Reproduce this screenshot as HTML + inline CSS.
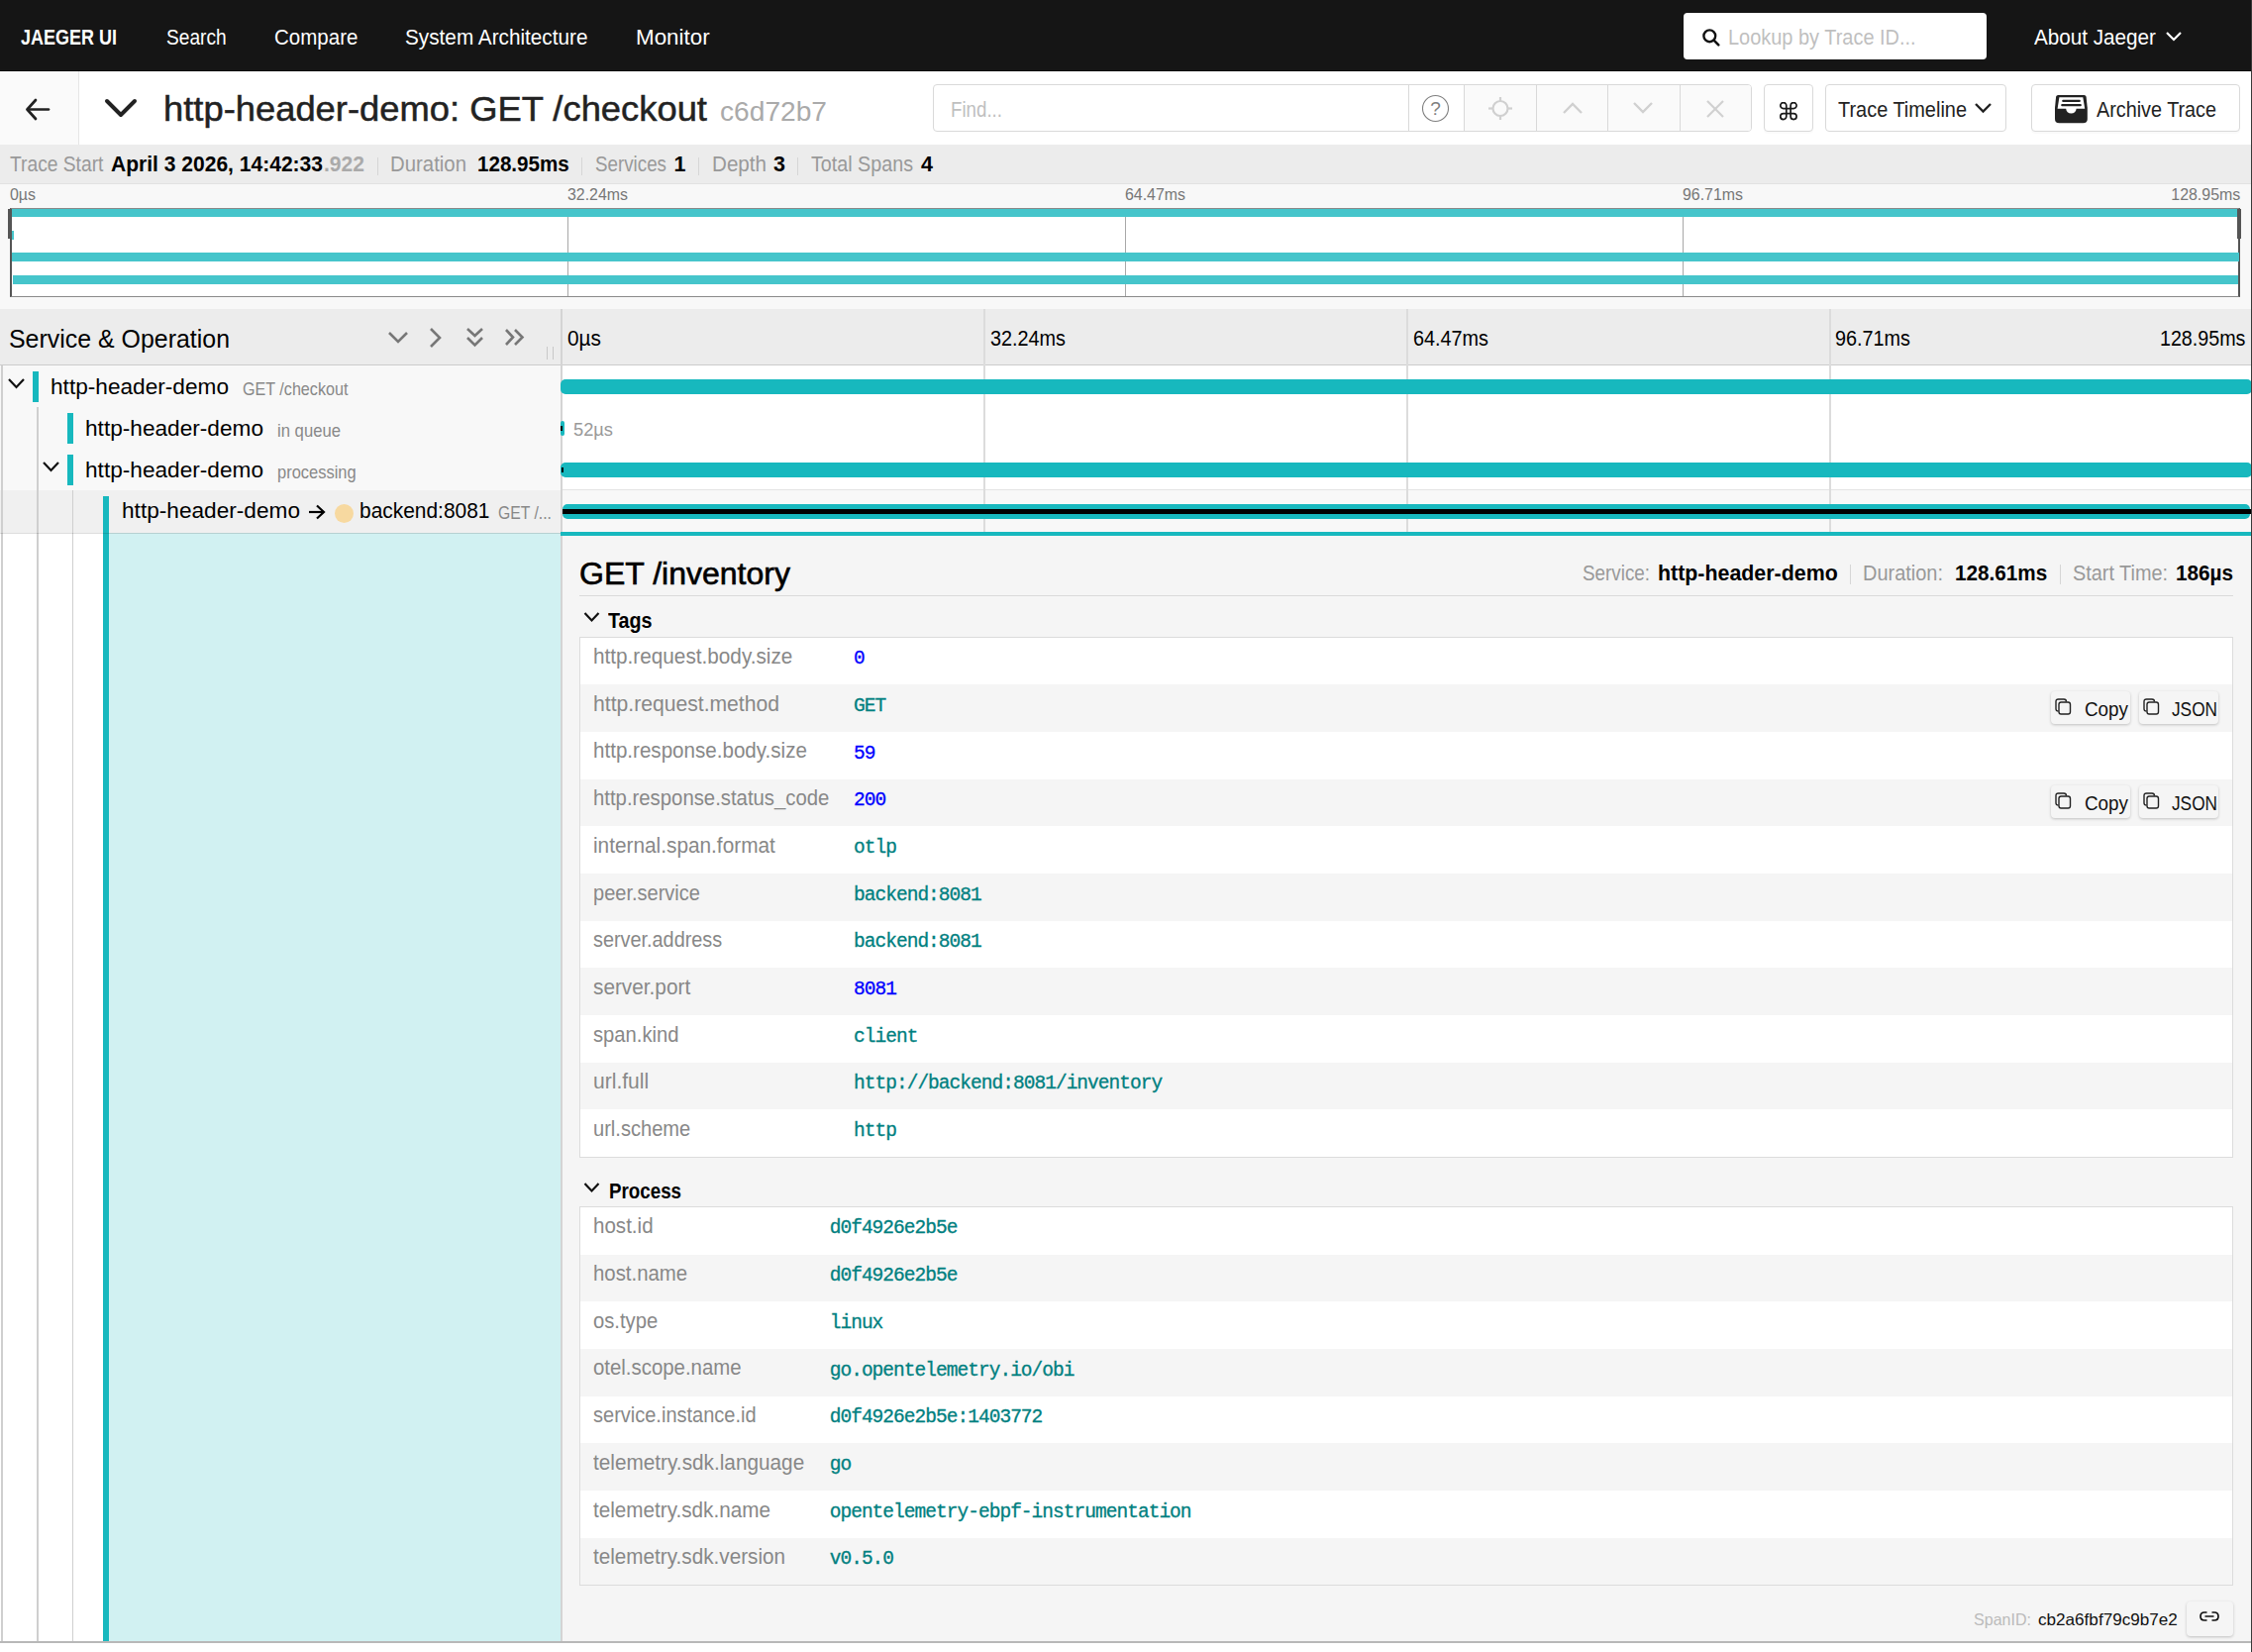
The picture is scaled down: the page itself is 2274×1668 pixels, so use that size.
<!DOCTYPE html><html><head><meta charset="utf-8"><style>html,body{margin:0;padding:0;width:2274px;height:1668px;overflow:hidden;position:relative;background:#fff;font-family:"Liberation Sans",sans-serif}</style></head><body>
<div style="position:absolute;left:0px;top:0px;width:2274px;height:71px;background:#151515;"></div>
<div style="position:absolute;left:0px;top:71px;width:2274px;height:1px;background:#000;"></div>
<div style="position:absolute;left:1700px;top:13px;width:306px;height:47px;background:#fff;border-radius:4px"></div>
<svg style="position:absolute;left:1718px;top:28px" width="20" height="20" viewBox="0 0 20 20"><circle cx="8.3" cy="8.3" r="5.9" fill="none" stroke="#111" stroke-width="2.4"/><line x1="12.6" y1="12.6" x2="17.3" y2="17.3" stroke="#111" stroke-width="2.6" stroke-linecap="round"/></svg>
<svg style="position:absolute;left:2186px;top:30px" width="18" height="13" viewBox="0 0 18 13"><polyline points="2,3 9,10 16,3" fill="none" stroke="#fff" stroke-width="2.2"/></svg>
<div style="position:absolute;left:0px;top:72px;width:2274px;height:74px;background:#fff;"></div>
<div style="position:absolute;left:0px;top:72px;width:80px;height:75px;background:#fafafa;border-right:1px solid #e6e6e6;box-sizing:border-box"></div>
<svg style="position:absolute;left:24px;top:97.5px" width="28" height="25" viewBox="0 0 28 25"><polyline points="12,3 3.5,12.5 12,22" fill="none" stroke="#222" stroke-width="2.7" stroke-linecap="round" stroke-linejoin="round"/><line x1="4" y1="12.5" x2="25" y2="12.5" stroke="#222" stroke-width="2.7" stroke-linecap="round"/></svg>
<svg style="position:absolute;left:104px;top:97px" width="36" height="26" viewBox="0 0 36 26"><polyline points="4,5 18,19 32,5" fill="none" stroke="#222" stroke-width="4" stroke-linecap="round" stroke-linejoin="round"/></svg>
<div style="position:absolute;left:942px;top:85px;width:827px;height:48px;box-sizing:border-box;border:1px solid #d9d9d9;border-radius:4px;background:#fff;overflow:hidden"><div style="position:absolute;left:479px;top:0;width:1px;height:100%;background:#d9d9d9"></div><div style="position:absolute;left:536px;top:0;right:0;height:100%;background:#fafafa"></div><div style="position:absolute;left:535px;top:0;width:1px;height:100%;background:#d9d9d9"></div><div style="position:absolute;left:608px;top:0;width:1px;height:100%;background:#d9d9d9"></div><div style="position:absolute;left:680px;top:0;width:1px;height:100%;background:#d9d9d9"></div><div style="position:absolute;left:753px;top:0;width:1px;height:100%;background:#d9d9d9"></div></div>
<svg style="position:absolute;left:1435px;top:95px" width="30" height="30" viewBox="0 0 30 30"><circle cx="14.5" cy="14.5" r="13" fill="none" stroke="#808080" stroke-width="1.1"/><text x="14.5" y="21" text-anchor="middle" font-family="Liberation Sans" font-size="19" fill="#808080">?</text></svg>
<svg style="position:absolute;left:1502px;top:97px" width="26" height="26" viewBox="0 0 26 26"><circle cx="13" cy="12.5" r="7.5" fill="none" stroke="#d0d0d0" stroke-width="2.2"/><line x1="13" y1="1" x2="13" y2="5" stroke="#d0d0d0" stroke-width="2.2"/><line x1="13" y1="20" x2="13" y2="24" stroke="#d0d0d0" stroke-width="2.2"/><line x1="1" y1="12.5" x2="5.5" y2="12.5" stroke="#d0d0d0" stroke-width="2.2"/><line x1="20.5" y1="12.5" x2="25" y2="12.5" stroke="#d0d0d0" stroke-width="2.2"/></svg>
<svg style="position:absolute;left:1577px;top:102px" width="22" height="14" viewBox="0 0 22 14"><polyline points="2,12 11,3 20,12" fill="none" stroke="#d0d0d0" stroke-width="2.4"/></svg>
<svg style="position:absolute;left:1648px;top:102px" width="22" height="14" viewBox="0 0 22 14"><polyline points="2,2 11,11 20,2" fill="none" stroke="#d0d0d0" stroke-width="2.4"/></svg>
<svg style="position:absolute;left:1722px;top:101px" width="20" height="18" viewBox="0 0 20 18"><line x1="2" y1="1" x2="18" y2="17" stroke="#d0d0d0" stroke-width="2.2"/><line x1="18" y1="1" x2="2" y2="17" stroke="#d0d0d0" stroke-width="2.2"/></svg>
<div style="position:absolute;left:1781px;top:85px;width:50px;height:48px;box-sizing:border-box;border:1px solid #d9d9d9;border-radius:4px;background:#fff;box-shadow:0 2px 0 rgba(0,0,0,0.015)"></div>
<svg style="position:absolute;left:1797px;top:102.5px" width="19" height="19" viewBox="0 0 19 19"><path d="M6.8 3.6 A3 3 0 1 0 3.8 6.6 L14.1 6.6 A3 3 0 1 0 11.1 3.6 L11.1 14.6 A3 3 0 1 0 14.1 11.6 L3.8 11.6 A3 3 0 1 0 6.8 14.6 Z" fill="none" stroke="#1a1a1a" stroke-width="1.7"/></svg>
<div style="position:absolute;left:1843px;top:85px;width:183px;height:48px;box-sizing:border-box;border:1px solid #d9d9d9;border-radius:4px;background:#fff"></div>
<svg style="position:absolute;left:1993px;top:102px" width="19" height="14" viewBox="0 0 19 14"><polyline points="2,3 9.5,10.5 17,3" fill="none" stroke="#222" stroke-width="2.4"/></svg>
<div style="position:absolute;left:2050.5px;top:85px;width:211px;height:48px;box-sizing:border-box;border:1px solid #d9d9d9;border-radius:4px;background:#fff;box-shadow:0 2px 0 rgba(0,0,0,0.02)"></div>
<svg style="position:absolute;left:2075px;top:95.5px" width="34" height="29" viewBox="0 0 34 29"><path d="M3.2 0 L29.5 0 Q31.2 0 31.6 1.8 L32.8 13 L32.8 24 Q32.8 28.3 28.5 28.3 L4.3 28.3 Q0 28.3 0 24 L0 13 L1.1 1.8 Q1.5 0 3.2 0 Z" fill="#222"/><path d="M4.4 2.3 L28.3 2.3 L30.2 13.8 L21.6 13.8 A5.2 4.8 0 0 1 11.2 13.8 L2.6 13.8 Z" fill="#fff"/><rect x="7.2" y="4.7" width="18.6" height="2.3" rx="1" fill="#222"/><rect x="6.2" y="9" width="20.6" height="2.3" rx="1" fill="#222"/></svg>
<div style="position:absolute;left:0px;top:146px;width:2274px;height:40px;background:#ececec;"></div>
<div style="position:absolute;left:0px;top:185px;width:2274px;height:1px;background:#e2e2e2;"></div>
<div style="position:absolute;left:381px;top:159px;width:1px;height:18px;background:#d6d6d6;"></div>
<div style="position:absolute;left:587px;top:159px;width:1px;height:18px;background:#d6d6d6;"></div>
<div style="position:absolute;left:705px;top:159px;width:1px;height:18px;background:#d6d6d6;"></div>
<div style="position:absolute;left:805px;top:159px;width:1px;height:18px;background:#d6d6d6;"></div>
<div style="position:absolute;left:0px;top:186px;width:2274px;height:126px;background:#f8f8f8;"></div>
<div style="position:absolute;left:10px;top:210px;width:2252px;height:90px;box-sizing:border-box;background:#fff;border:1px solid #8a8a8a;border-left:2px solid #555;border-right:2px solid #555"></div>
<div style="position:absolute;left:573px;top:211px;width:1.2999999999999545px;height:88px;background:#a8a8a8;"></div>
<div style="position:absolute;left:1136px;top:211px;width:1.2999999999999545px;height:88px;background:#a8a8a8;"></div>
<div style="position:absolute;left:1699px;top:211px;width:1.2999999999999545px;height:88px;background:#a8a8a8;"></div>
<div style="position:absolute;left:12px;top:211px;width:2249px;height:8px;background:#46c5cb;"></div>
<div style="position:absolute;left:12px;top:233px;width:2px;height:9px;background:#46c5cb;"></div>
<div style="position:absolute;left:12px;top:255px;width:2248.5px;height:9px;background:#46c5cb;"></div>
<div style="position:absolute;left:13px;top:278px;width:2246.5px;height:9px;background:#46c5cb;"></div>
<div style="position:absolute;left:8px;top:211px;width:4px;height:30px;background:#555;"></div>
<div style="position:absolute;left:2259px;top:211px;width:4px;height:30px;background:#555;"></div>
<div style="position:absolute;left:0px;top:312px;width:2274px;height:56px;background:#ececec;"></div>
<div style="position:absolute;left:0px;top:368px;width:2274px;height:1px;background:#cccccc;"></div>
<svg style="position:absolute;left:390px;top:333px" width="24" height="16" viewBox="0 0 24 16"><polyline points="3,3 12,12 21,3" fill="none" stroke="#777" stroke-width="2.6"/></svg>
<svg style="position:absolute;left:431px;top:329px" width="17" height="24" viewBox="0 0 17 24"><polyline points="4,3 13,12 4,21" fill="none" stroke="#777" stroke-width="2.6"/></svg>
<svg style="position:absolute;left:469px;top:329px" width="21" height="23" viewBox="0 0 21 23"><polyline points="3,3 10.5,10 18,3" fill="none" stroke="#777" stroke-width="2.6"/><polyline points="3,12 10.5,19.5 18,12" fill="none" stroke="#777" stroke-width="2.6"/></svg>
<svg style="position:absolute;left:508px;top:330px" width="23" height="21" viewBox="0 0 23 21"><polyline points="3,3 10,10.5 3,18" fill="none" stroke="#777" stroke-width="2.6"/><polyline points="12,3 19.5,10.5 12,18" fill="none" stroke="#777" stroke-width="2.6"/></svg>
<div style="position:absolute;left:552px;top:350px;width:1px;height:13px;background:#c8c8c8;"></div>
<div style="position:absolute;left:557.5px;top:350px;width:1.0px;height:13px;background:#c8c8c8;"></div>
<div style="position:absolute;left:0px;top:369px;width:567px;height:126px;background:#f8f8f8;"></div>
<div style="position:absolute;left:568px;top:369px;width:1706px;height:126px;background:#fff;"></div>
<div style="position:absolute;left:0px;top:495px;width:567px;height:43px;background:#f0f0f0;"></div>
<div style="position:absolute;left:568px;top:495px;width:1706px;height:42px;background:#f8f8f8;"></div>
<div style="position:absolute;left:568px;top:494px;width:1706px;height:1px;background:#e4e4e4;"></div>
<div style="position:absolute;left:993px;top:312px;width:2px;height:225px;background:#dcdcdc;"></div>
<div style="position:absolute;left:1420px;top:312px;width:2px;height:225px;background:#dcdcdc;"></div>
<div style="position:absolute;left:1847px;top:312px;width:2px;height:225px;background:#dcdcdc;"></div>
<div style="position:absolute;left:1px;top:369px;width:2px;height:1288px;background:#cfcfcf;"></div>
<div style="position:absolute;left:37px;top:411px;width:1.5px;height:1246px;background:#cfcfcf;"></div>
<div style="position:absolute;left:72.5px;top:495px;width:1.5px;height:1162px;background:#cfcfcf;"></div>
<div style="position:absolute;left:566px;top:312px;width:2px;height:1345px;background:#d4d4d4;"></div>
<svg style="position:absolute;left:7px;top:380px" width="19" height="14" viewBox="0 0 19 14"><polyline points="2,3 9.5,11 17,3" fill="none" stroke="#111" stroke-width="2.2"/></svg>
<div style="position:absolute;left:33px;top:375px;width:6px;height:31px;background:#17b8be;"></div>
<div style="position:absolute;left:68px;top:417px;width:6px;height:31px;background:#17b8be;"></div>
<svg style="position:absolute;left:42px;top:464px" width="19" height="14" viewBox="0 0 19 14"><polyline points="2,3 9.5,11 17,3" fill="none" stroke="#111" stroke-width="2.2"/></svg>
<div style="position:absolute;left:68px;top:459px;width:6px;height:31px;background:#17b8be;"></div>
<div style="position:absolute;left:104px;top:501px;width:6px;height:1156px;background:#17b8be;"></div>
<svg style="position:absolute;left:310px;top:508px" width="20" height="18" viewBox="0 0 20 18"><line x1="2" y1="9" x2="17" y2="9" stroke="#000" stroke-width="2.2"/><polyline points="10,2.5 17,9 10,15.5" fill="none" stroke="#000" stroke-width="2.2"/></svg>
<div style="position:absolute;left:337.8px;top:508.6px;width:19px;height:19px;border-radius:50%;background:#f7d9a0"></div>
<div style="position:absolute;left:566px;top:383px;width:1708px;height:15px;background:#17b8be;border-radius:5px"></div>
<div style="position:absolute;left:566px;top:425px;width:3.5px;height:15px;background:#17b8be;border-radius:2px"></div>
<div style="position:absolute;left:566px;top:430px;width:1.5px;height:5px;background:#000;"></div>
<div style="position:absolute;left:566px;top:467px;width:1708px;height:15px;background:#17b8be;border-radius:5px"></div>
<div style="position:absolute;left:567px;top:472px;width:2px;height:5px;background:#000;"></div>
<div style="position:absolute;left:568px;top:509px;width:1704px;height:15px;background:#17b8be;border-radius:5px"></div>
<div style="position:absolute;left:568px;top:514px;width:1705px;height:5px;background:#000;"></div>
<div style="position:absolute;left:566px;top:537px;width:1708px;height:4px;background:#17b8be;"></div>
<div style="position:absolute;left:110px;top:538px;width:456px;height:1119px;background:#d1f1f2;"></div>
<div style="position:absolute;left:0px;top:537.5px;width:566px;height:1.5px;background:rgba(0,0,0,0.13);"></div>
<div style="position:absolute;left:568px;top:541px;width:1705px;height:1116px;background:#f5f5f5;"></div>
<div style="position:absolute;left:1868px;top:570px;width:1px;height:20px;background:#d6d6d6;"></div>
<div style="position:absolute;left:2079.5px;top:570px;width:1.0px;height:20px;background:#d6d6d6;"></div>
<div style="position:absolute;left:585px;top:601px;width:1670px;height:1px;background:#dadada;"></div>
<svg style="position:absolute;left:588px;top:616px" width="19" height="14" viewBox="0 0 19 14"><polyline points="2.5,3 9.5,10.5 16.5,3" fill="none" stroke="#111" stroke-width="2.2"/></svg>
<div style="position:absolute;left:585px;top:643px;width:1670px;height:525.7px;box-sizing:border-box;border:1px solid #dcdcdc;background:#fff"></div>
<div style="position:absolute;left:586px;top:691.2px;width:1668px;height:47.69999999999993px;background:#f5f5f5;"></div>
<div style="position:absolute;left:586px;top:786.6px;width:1668px;height:47.69999999999993px;background:#f5f5f5;"></div>
<div style="position:absolute;left:586px;top:882.0px;width:1668px;height:47.700000000000045px;background:#f5f5f5;"></div>
<div style="position:absolute;left:586px;top:977.4px;width:1668px;height:47.69999999999993px;background:#f5f5f5;"></div>
<div style="position:absolute;left:586px;top:1072.8px;width:1668px;height:47.700000000000045px;background:#f5f5f5;"></div>
<div style="position:absolute;left:2071px;top:697.7px;width:80px;height:33px;box-sizing:border-box;border-radius:4px;background:#f5f5f5;box-shadow:0 1px 3px rgba(0,0,0,0.22)"></div>
<svg style="position:absolute;left:2074px;top:703.7px" width="19" height="19" viewBox="0 0 19 19"><path d="M4.5 14 Q2 14 2 11.5 L2 4.5 Q2 2 4.5 2 L10 2 Q12.5 2 12.5 4.5" fill="none" stroke="#222" stroke-width="1.4"/><rect x="5" y="5" width="11.5" height="12" rx="2.2" fill="#f5f5f5" stroke="#222" stroke-width="1.4"/></svg>
<div style="position:absolute;left:2160px;top:697.7px;width:80px;height:33px;box-sizing:border-box;border-radius:4px;background:#f5f5f5;box-shadow:0 1px 3px rgba(0,0,0,0.22)"></div>
<svg style="position:absolute;left:2163px;top:703.7px" width="19" height="19" viewBox="0 0 19 19"><path d="M4.5 14 Q2 14 2 11.5 L2 4.5 Q2 2 4.5 2 L10 2 Q12.5 2 12.5 4.5" fill="none" stroke="#222" stroke-width="1.4"/><rect x="5" y="5" width="11.5" height="12" rx="2.2" fill="#f5f5f5" stroke="#222" stroke-width="1.4"/></svg>
<div style="position:absolute;left:2071px;top:793.1px;width:80px;height:33px;box-sizing:border-box;border-radius:4px;background:#f5f5f5;box-shadow:0 1px 3px rgba(0,0,0,0.22)"></div>
<svg style="position:absolute;left:2074px;top:799.1px" width="19" height="19" viewBox="0 0 19 19"><path d="M4.5 14 Q2 14 2 11.5 L2 4.5 Q2 2 4.5 2 L10 2 Q12.5 2 12.5 4.5" fill="none" stroke="#222" stroke-width="1.4"/><rect x="5" y="5" width="11.5" height="12" rx="2.2" fill="#f5f5f5" stroke="#222" stroke-width="1.4"/></svg>
<div style="position:absolute;left:2160px;top:793.1px;width:80px;height:33px;box-sizing:border-box;border-radius:4px;background:#f5f5f5;box-shadow:0 1px 3px rgba(0,0,0,0.22)"></div>
<svg style="position:absolute;left:2163px;top:799.1px" width="19" height="19" viewBox="0 0 19 19"><path d="M4.5 14 Q2 14 2 11.5 L2 4.5 Q2 2 4.5 2 L10 2 Q12.5 2 12.5 4.5" fill="none" stroke="#222" stroke-width="1.4"/><rect x="5" y="5" width="11.5" height="12" rx="2.2" fill="#f5f5f5" stroke="#222" stroke-width="1.4"/></svg>
<svg style="position:absolute;left:588px;top:1192px" width="19" height="14" viewBox="0 0 19 14"><polyline points="2.5,3 9.5,10.5 16.5,3" fill="none" stroke="#111" stroke-width="2.2"/></svg>
<div style="position:absolute;left:585px;top:1218.3px;width:1670px;height:382.6px;box-sizing:border-box;border:1px solid #dcdcdc;background:#fff"></div>
<div style="position:absolute;left:586px;top:1266.5px;width:1668px;height:47.700000000000045px;background:#f5f5f5;"></div>
<div style="position:absolute;left:586px;top:1361.9px;width:1668px;height:47.69999999999982px;background:#f5f5f5;"></div>
<div style="position:absolute;left:586px;top:1457.3px;width:1668px;height:47.700000000000045px;background:#f5f5f5;"></div>
<div style="position:absolute;left:586px;top:1552.7px;width:1668px;height:47.200000000000045px;background:#f5f5f5;"></div>
<div style="position:absolute;left:2208px;top:1616.5px;width:46.5px;height:35px;box-sizing:border-box;border-radius:4px;background:#f5f5f5;box-shadow:0 1px 3px rgba(0,0,0,0.22)"></div>
<svg style="position:absolute;left:2221px;top:1627px" width="20" height="11" viewBox="0 0 20 11"><path d="M7.5 1 L5 1 Q1 1 1 5 Q1 9 5 9 L7.5 9 M12.5 1 L15 1 Q19 1 19 5 Q19 9 15 9 L12.5 9 M5.5 5 L14.5 5" fill="none" stroke="#111" stroke-width="1.7"/></svg>
<div style="position:absolute;left:0px;top:1657px;width:2273px;height:2px;background:#b8b8b8;"></div>
<div style="position:absolute;left:0px;top:1659px;width:2274px;height:9px;background:#fff;"></div>
<div style="position:absolute;left:2273px;top:0px;width:1px;height:1668px;background:#3a3a3a;"></div>
<div id="t0" style="position:absolute;left:21.00px;top:25.85px;font-family:'Liberation Sans', sans-serif;font-size:21.5px;font-weight:700;color:#fff;white-space:pre;line-height:normal;transform:scaleX(0.8370);transform-origin:left top;">JAEGER UI</div>
<div id="t1" style="position:absolute;left:167.60px;top:26.15px;font-family:'Liberation Sans', sans-serif;font-size:21.5px;font-weight:400;color:#fff;white-space:pre;line-height:normal;transform:scaleX(0.8910);transform-origin:left top;">Search</div>
<div id="t2" style="position:absolute;left:276.60px;top:26.15px;font-family:'Liberation Sans', sans-serif;font-size:21.5px;font-weight:400;color:#fff;white-space:pre;line-height:normal;transform:scaleX(0.9543);transform-origin:left top;">Compare</div>
<div id="t3" style="position:absolute;left:409.00px;top:26.15px;font-family:'Liberation Sans', sans-serif;font-size:21.5px;font-weight:400;color:#fff;white-space:pre;line-height:normal;transform:scaleX(0.9650);transform-origin:left top;">System Architecture</div>
<div id="t4" style="position:absolute;left:642.00px;top:26.15px;font-family:'Liberation Sans', sans-serif;font-size:21.5px;font-weight:400;color:#fff;white-space:pre;line-height:normal;transform:scaleX(1.0404);transform-origin:left top;">Monitor</div>
<div id="t5" style="position:absolute;left:1745.00px;top:26.45px;font-family:'Liberation Sans', sans-serif;font-size:21.5px;font-weight:400;color:#bfbfbf;white-space:pre;line-height:normal;transform:scaleX(0.9278);transform-origin:left top;">Lookup by Trace ID...</div>
<div id="t6" style="position:absolute;left:2054.00px;top:26.45px;font-family:'Liberation Sans', sans-serif;font-size:21.5px;font-weight:400;color:#fff;white-space:pre;line-height:normal;transform:scaleX(0.9616);transform-origin:left top;">About Jaeger</div>
<div id="t7" style="position:absolute;left:165.00px;top:89.96px;font-family:'Liberation Sans', sans-serif;font-size:35.6px;font-weight:400;color:#222;white-space:pre;line-height:normal;transform:scaleX(1.0218);transform-origin:left top;-webkit-text-stroke:0.5px #222;">http-header-demo: GET /checkout</div>
<div id="t8" style="position:absolute;left:727.00px;top:96.35px;font-family:'Liberation Sans', sans-serif;font-size:28.5px;font-weight:400;color:#aaa;white-space:pre;line-height:normal;transform:scaleX(0.9876);transform-origin:left top;">c6d72b7</div>
<div id="t9" style="position:absolute;left:960.00px;top:99.15px;font-family:'Liberation Sans', sans-serif;font-size:21.5px;font-weight:400;color:#bfbfbf;white-space:pre;line-height:normal;transform:scaleX(0.8703);transform-origin:left top;">Find...</div>
<div id="t10" style="position:absolute;left:1856.00px;top:99.15px;font-family:'Liberation Sans', sans-serif;font-size:21.5px;font-weight:400;color:#222;white-space:pre;line-height:normal;transform:scaleX(0.9272);transform-origin:left top;">Trace Timeline</div>
<div id="t11" style="position:absolute;left:2117.00px;top:99.15px;font-family:'Liberation Sans', sans-serif;font-size:21.5px;font-weight:400;color:#222;white-space:pre;line-height:normal;transform:scaleX(0.9206);transform-origin:left top;">Archive Trace</div>
<div id="t12" style="position:absolute;left:10.00px;top:154.35px;font-family:'Liberation Sans', sans-serif;font-size:21.5px;font-weight:400;color:#999;white-space:pre;line-height:normal;transform:scaleX(0.8944);transform-origin:left top;">Trace Start</div>
<div id="t13" style="position:absolute;left:112.00px;top:154.35px;font-family:'Liberation Sans', sans-serif;font-size:21.5px;font-weight:700;color:#000;white-space:pre;line-height:normal;transform:scaleX(0.9784);transform-origin:left top;">April 3 2026, 14:42:33</div>
<div id="t14" style="position:absolute;left:326.50px;top:154.35px;font-family:'Liberation Sans', sans-serif;font-size:21.5px;font-weight:700;color:#aaa;white-space:pre;line-height:normal;transform:scaleX(0.9795);transform-origin:left top;">.922</div>
<div id="t15" style="position:absolute;left:394.30px;top:154.35px;font-family:'Liberation Sans', sans-serif;font-size:21.5px;font-weight:400;color:#999;white-space:pre;line-height:normal;transform:scaleX(0.9475);transform-origin:left top;">Duration</div>
<div id="t16" style="position:absolute;left:482.00px;top:154.35px;font-family:'Liberation Sans', sans-serif;font-size:21.5px;font-weight:700;color:#000;white-space:pre;line-height:normal;transform:scaleX(0.9582);transform-origin:left top;">128.95ms</div>
<div id="t17" style="position:absolute;left:601.00px;top:154.35px;font-family:'Liberation Sans', sans-serif;font-size:21.5px;font-weight:400;color:#999;white-space:pre;line-height:normal;transform:scaleX(0.8732);transform-origin:left top;">Services</div>
<div id="t18" style="position:absolute;left:680.50px;top:154.35px;font-family:'Liberation Sans', sans-serif;font-size:21.5px;font-weight:700;color:#000;white-space:pre;line-height:normal;">1</div>
<div id="t19" style="position:absolute;left:718.70px;top:154.35px;font-family:'Liberation Sans', sans-serif;font-size:21.5px;font-weight:400;color:#999;white-space:pre;line-height:normal;transform:scaleX(0.9586);transform-origin:left top;">Depth</div>
<div id="t20" style="position:absolute;left:781.00px;top:154.35px;font-family:'Liberation Sans', sans-serif;font-size:21.5px;font-weight:700;color:#000;white-space:pre;line-height:normal;">3</div>
<div id="t21" style="position:absolute;left:819.00px;top:154.35px;font-family:'Liberation Sans', sans-serif;font-size:21.5px;font-weight:400;color:#999;white-space:pre;line-height:normal;transform:scaleX(0.9167);transform-origin:left top;">Total Spans</div>
<div id="t22" style="position:absolute;left:930.00px;top:154.35px;font-family:'Liberation Sans', sans-serif;font-size:21.5px;font-weight:700;color:#000;white-space:pre;line-height:normal;">4</div>
<div id="t23" style="position:absolute;left:10.00px;top:188.00px;font-family:'Liberation Sans', sans-serif;font-size:16px;font-weight:400;color:#777;white-space:pre;line-height:normal;transform:scaleX(0.9952);transform-origin:left top;">0µs</div>
<div id="t24" style="position:absolute;left:573.00px;top:188.00px;font-family:'Liberation Sans', sans-serif;font-size:16px;font-weight:400;color:#777;white-space:pre;line-height:normal;transform:scaleX(0.9939);transform-origin:left top;">32.24ms</div>
<div id="t25" style="position:absolute;left:1136.00px;top:188.00px;font-family:'Liberation Sans', sans-serif;font-size:16px;font-weight:400;color:#777;white-space:pre;line-height:normal;transform:scaleX(0.9939);transform-origin:left top;">64.47ms</div>
<div id="t26" style="position:absolute;left:1699.00px;top:188.00px;font-family:'Liberation Sans', sans-serif;font-size:16px;font-weight:400;color:#777;white-space:pre;line-height:normal;transform:scaleX(0.9939);transform-origin:left top;">96.71ms</div>
<div id="t27" style="position:absolute;right:12.00px;top:188.00px;font-family:'Liberation Sans', sans-serif;font-size:16px;font-weight:400;color:#777;white-space:pre;line-height:normal;transform:scaleX(0.9962);transform-origin:right top;">128.95ms</div>
<div id="t28" style="position:absolute;left:9.30px;top:326.60px;font-family:'Liberation Sans', sans-serif;font-size:26px;font-weight:400;color:#000;white-space:pre;line-height:normal;transform:scaleX(0.9584);transform-origin:left top;">Service &amp; Operation</div>
<div id="t29" style="position:absolute;left:572.60px;top:330.45px;font-family:'Liberation Sans', sans-serif;font-size:21.5px;font-weight:400;color:#000;white-space:pre;line-height:normal;transform:scaleX(0.9684);transform-origin:left top;">0µs</div>
<div id="t30" style="position:absolute;left:1000.00px;top:330.45px;font-family:'Liberation Sans', sans-serif;font-size:21.5px;font-weight:400;color:#000;white-space:pre;line-height:normal;transform:scaleX(0.9216);transform-origin:left top;">32.24ms</div>
<div id="t31" style="position:absolute;left:1427.00px;top:330.45px;font-family:'Liberation Sans', sans-serif;font-size:21.5px;font-weight:400;color:#000;white-space:pre;line-height:normal;transform:scaleX(0.9216);transform-origin:left top;">64.47ms</div>
<div id="t32" style="position:absolute;left:1853.00px;top:330.45px;font-family:'Liberation Sans', sans-serif;font-size:21.5px;font-weight:400;color:#000;white-space:pre;line-height:normal;transform:scaleX(0.9216);transform-origin:left top;">96.71ms</div>
<div id="t33" style="position:absolute;right:7.00px;top:330.45px;font-family:'Liberation Sans', sans-serif;font-size:21.5px;font-weight:400;color:#000;white-space:pre;line-height:normal;transform:scaleX(0.9161);transform-origin:right top;">128.95ms</div>
<div id="t34" style="position:absolute;left:51.30px;top:379.15px;font-family:'Liberation Sans', sans-serif;font-size:21.5px;font-weight:400;color:#000;white-space:pre;line-height:normal;transform:scaleX(1.0531);transform-origin:left top;">http-header-demo</div>
<div id="t35" style="position:absolute;left:244.60px;top:381.85px;font-family:'Liberation Sans', sans-serif;font-size:18.5px;font-weight:400;color:#888;white-space:pre;line-height:normal;transform:scaleX(0.8719);transform-origin:left top;">GET /checkout</div>
<div id="t36" style="position:absolute;left:86.40px;top:421.15px;font-family:'Liberation Sans', sans-serif;font-size:21.5px;font-weight:400;color:#000;white-space:pre;line-height:normal;transform:scaleX(1.0531);transform-origin:left top;">http-header-demo</div>
<div id="t37" style="position:absolute;left:279.80px;top:423.85px;font-family:'Liberation Sans', sans-serif;font-size:18.5px;font-weight:400;color:#888;white-space:pre;line-height:normal;transform:scaleX(0.9016);transform-origin:left top;">in queue</div>
<div id="t38" style="position:absolute;left:86.40px;top:463.15px;font-family:'Liberation Sans', sans-serif;font-size:21.5px;font-weight:400;color:#000;white-space:pre;line-height:normal;transform:scaleX(1.0531);transform-origin:left top;">http-header-demo</div>
<div id="t39" style="position:absolute;left:280.00px;top:465.85px;font-family:'Liberation Sans', sans-serif;font-size:18.5px;font-weight:400;color:#888;white-space:pre;line-height:normal;transform:scaleX(0.8897);transform-origin:left top;">processing</div>
<div id="t40" style="position:absolute;left:122.50px;top:504.15px;font-family:'Liberation Sans', sans-serif;font-size:21.5px;font-weight:400;color:#000;white-space:pre;line-height:normal;transform:scaleX(1.0531);transform-origin:left top;">http-header-demo</div>
<div id="t41" style="position:absolute;left:363.00px;top:504.15px;font-family:'Liberation Sans', sans-serif;font-size:21.5px;font-weight:400;color:#000;white-space:pre;line-height:normal;transform:scaleX(0.9734);transform-origin:left top;">backend:8081</div>
<div id="t42" style="position:absolute;left:503.00px;top:506.85px;font-family:'Liberation Sans', sans-serif;font-size:18.5px;font-weight:400;color:#888;white-space:pre;line-height:normal;transform:scaleX(0.8517);transform-origin:left top;">GET /...</div>
<div id="t43" style="position:absolute;left:579.00px;top:423.35px;font-family:'Liberation Sans', sans-serif;font-size:18.5px;font-weight:400;color:#999;white-space:pre;line-height:normal;transform:scaleX(0.9877);transform-origin:left top;">52µs</div>
<div id="t44" style="position:absolute;left:585.00px;top:561.60px;font-family:'Liberation Sans', sans-serif;font-size:31px;font-weight:400;color:#000;white-space:pre;line-height:normal;transform:scaleX(1.0330);transform-origin:left top;-webkit-text-stroke:0.6px #000;">GET /inventory</div>
<div id="t45" style="position:absolute;left:1598.00px;top:566.65px;font-family:'Liberation Sans', sans-serif;font-size:21.5px;font-weight:400;color:#999;white-space:pre;line-height:normal;transform:scaleX(0.8755);transform-origin:left top;">Service:</div>
<div id="t46" style="position:absolute;left:1673.80px;top:566.65px;font-family:'Liberation Sans', sans-serif;font-size:21.5px;font-weight:700;color:#000;white-space:pre;line-height:normal;transform:scaleX(0.9943);transform-origin:left top;">http-header-demo</div>
<div id="t47" style="position:absolute;left:1881.00px;top:566.65px;font-family:'Liberation Sans', sans-serif;font-size:21.5px;font-weight:400;color:#999;white-space:pre;line-height:normal;transform:scaleX(0.9284);transform-origin:left top;">Duration:</div>
<div id="t48" style="position:absolute;left:1973.80px;top:566.65px;font-family:'Liberation Sans', sans-serif;font-size:21.5px;font-weight:700;color:#000;white-space:pre;line-height:normal;transform:scaleX(0.9624);transform-origin:left top;">128.61ms</div>
<div id="t49" style="position:absolute;left:2092.80px;top:566.65px;font-family:'Liberation Sans', sans-serif;font-size:21.5px;font-weight:400;color:#999;white-space:pre;line-height:normal;transform:scaleX(0.9235);transform-origin:left top;">Start Time:</div>
<div id="t50" style="position:absolute;left:2197.00px;top:566.65px;font-family:'Liberation Sans', sans-serif;font-size:21.5px;font-weight:700;color:#000;white-space:pre;line-height:normal;transform:scaleX(0.9632);transform-origin:left top;">186µs</div>
<div id="t51" style="position:absolute;left:614.00px;top:615.25px;font-family:'Liberation Sans', sans-serif;font-size:21.5px;font-weight:700;color:#000;white-space:pre;line-height:normal;transform:scaleX(0.9178);transform-origin:left top;">Tags</div>
<div id="t52" style="position:absolute;left:599.30px;top:651.05px;font-family:'Liberation Sans', sans-serif;font-size:21.5px;font-weight:400;color:#888;white-space:pre;line-height:normal;transform:scaleX(0.9647);transform-origin:left top;">http.request.body.size</div>
<div id="t53" style="position:absolute;left:862.00px;top:654.12px;font-family:'Liberation Mono', monospace;font-size:19.5px;font-weight:400;color:#0000ff;white-space:pre;line-height:normal;letter-spacing:-0.970px;-webkit-text-stroke:0.3px #0000ff;">0</div>
<div id="t54" style="position:absolute;left:599.30px;top:698.75px;font-family:'Liberation Sans', sans-serif;font-size:21.5px;font-weight:400;color:#888;white-space:pre;line-height:normal;transform:scaleX(0.9831);transform-origin:left top;">http.request.method</div>
<div id="t55" style="position:absolute;left:862.00px;top:701.82px;font-family:'Liberation Mono', monospace;font-size:19.5px;font-weight:400;color:#008080;white-space:pre;line-height:normal;letter-spacing:-0.970px;-webkit-text-stroke:0.3px #008080;">GET</div>
<div id="t56" style="position:absolute;left:599.30px;top:746.45px;font-family:'Liberation Sans', sans-serif;font-size:21.5px;font-weight:400;color:#888;white-space:pre;line-height:normal;transform:scaleX(0.9574);transform-origin:left top;">http.response.body.size</div>
<div id="t57" style="position:absolute;left:862.00px;top:749.51px;font-family:'Liberation Mono', monospace;font-size:19.5px;font-weight:400;color:#0000ff;white-space:pre;line-height:normal;letter-spacing:-0.970px;-webkit-text-stroke:0.3px #0000ff;">59</div>
<div id="t58" style="position:absolute;left:599.30px;top:794.15px;font-family:'Liberation Sans', sans-serif;font-size:21.5px;font-weight:400;color:#888;white-space:pre;line-height:normal;transform:scaleX(0.9453);transform-origin:left top;">http.response.status_code</div>
<div id="t59" style="position:absolute;left:862.00px;top:797.22px;font-family:'Liberation Mono', monospace;font-size:19.5px;font-weight:400;color:#0000ff;white-space:pre;line-height:normal;letter-spacing:-0.970px;-webkit-text-stroke:0.3px #0000ff;">200</div>
<div id="t60" style="position:absolute;left:599.30px;top:841.85px;font-family:'Liberation Sans', sans-serif;font-size:21.5px;font-weight:400;color:#888;white-space:pre;line-height:normal;transform:scaleX(0.9673);transform-origin:left top;">internal.span.format</div>
<div id="t61" style="position:absolute;left:862.00px;top:844.91px;font-family:'Liberation Mono', monospace;font-size:19.5px;font-weight:400;color:#008080;white-space:pre;line-height:normal;letter-spacing:-0.970px;-webkit-text-stroke:0.3px #008080;">otlp</div>
<div id="t62" style="position:absolute;left:599.30px;top:889.55px;font-family:'Liberation Sans', sans-serif;font-size:21.5px;font-weight:400;color:#888;white-space:pre;line-height:normal;transform:scaleX(0.9308);transform-origin:left top;">peer.service</div>
<div id="t63" style="position:absolute;left:862.00px;top:892.62px;font-family:'Liberation Mono', monospace;font-size:19.5px;font-weight:400;color:#008080;white-space:pre;line-height:normal;letter-spacing:-0.970px;-webkit-text-stroke:0.3px #008080;">backend:8081</div>
<div id="t64" style="position:absolute;left:599.30px;top:937.25px;font-family:'Liberation Sans', sans-serif;font-size:21.5px;font-weight:400;color:#888;white-space:pre;line-height:normal;transform:scaleX(0.9233);transform-origin:left top;">server.address</div>
<div id="t65" style="position:absolute;left:862.00px;top:940.32px;font-family:'Liberation Mono', monospace;font-size:19.5px;font-weight:400;color:#008080;white-space:pre;line-height:normal;letter-spacing:-0.970px;-webkit-text-stroke:0.3px #008080;">backend:8081</div>
<div id="t66" style="position:absolute;left:599.30px;top:984.95px;font-family:'Liberation Sans', sans-serif;font-size:21.5px;font-weight:400;color:#888;white-space:pre;line-height:normal;transform:scaleX(0.9667);transform-origin:left top;">server.port</div>
<div id="t67" style="position:absolute;left:862.00px;top:988.02px;font-family:'Liberation Mono', monospace;font-size:19.5px;font-weight:400;color:#0000ff;white-space:pre;line-height:normal;letter-spacing:-0.970px;-webkit-text-stroke:0.3px #0000ff;">8081</div>
<div id="t68" style="position:absolute;left:599.30px;top:1032.65px;font-family:'Liberation Sans', sans-serif;font-size:21.5px;font-weight:400;color:#888;white-space:pre;line-height:normal;transform:scaleX(0.9397);transform-origin:left top;">span.kind</div>
<div id="t69" style="position:absolute;left:862.00px;top:1035.71px;font-family:'Liberation Mono', monospace;font-size:19.5px;font-weight:400;color:#008080;white-space:pre;line-height:normal;letter-spacing:-0.970px;-webkit-text-stroke:0.3px #008080;">client</div>
<div id="t70" style="position:absolute;left:599.30px;top:1080.35px;font-family:'Liberation Sans', sans-serif;font-size:21.5px;font-weight:400;color:#888;white-space:pre;line-height:normal;transform:scaleX(0.9798);transform-origin:left top;">url.full</div>
<div id="t71" style="position:absolute;left:862.00px;top:1083.41px;font-family:'Liberation Mono', monospace;font-size:19.5px;font-weight:400;color:#008080;white-space:pre;line-height:normal;letter-spacing:-0.970px;-webkit-text-stroke:0.3px #008080;">http://backend:8081/inventory</div>
<div id="t72" style="position:absolute;left:599.30px;top:1128.05px;font-family:'Liberation Sans', sans-serif;font-size:21.5px;font-weight:400;color:#888;white-space:pre;line-height:normal;transform:scaleX(0.9348);transform-origin:left top;">url.scheme</div>
<div id="t73" style="position:absolute;left:862.00px;top:1131.12px;font-family:'Liberation Mono', monospace;font-size:19.5px;font-weight:400;color:#008080;white-space:pre;line-height:normal;letter-spacing:-0.970px;-webkit-text-stroke:0.3px #008080;">http</div>
<div id="t74" style="position:absolute;left:2105.00px;top:704.70px;font-family:'Liberation Sans', sans-serif;font-size:20px;font-weight:400;color:#111;white-space:pre;line-height:normal;transform:scaleX(0.9421);transform-origin:left top;">Copy</div>
<div id="t75" style="position:absolute;left:2193.00px;top:704.70px;font-family:'Liberation Sans', sans-serif;font-size:20px;font-weight:400;color:#111;white-space:pre;line-height:normal;transform:scaleX(0.8623);transform-origin:left top;">JSON</div>
<div id="t76" style="position:absolute;left:2105.00px;top:800.10px;font-family:'Liberation Sans', sans-serif;font-size:20px;font-weight:400;color:#111;white-space:pre;line-height:normal;transform:scaleX(0.9421);transform-origin:left top;">Copy</div>
<div id="t77" style="position:absolute;left:2193.00px;top:800.10px;font-family:'Liberation Sans', sans-serif;font-size:20px;font-weight:400;color:#111;white-space:pre;line-height:normal;transform:scaleX(0.8623);transform-origin:left top;">JSON</div>
<div id="t78" style="position:absolute;left:615.00px;top:1190.65px;font-family:'Liberation Sans', sans-serif;font-size:21.5px;font-weight:700;color:#000;white-space:pre;line-height:normal;transform:scaleX(0.8725);transform-origin:left top;">Process</div>
<div id="t79" style="position:absolute;left:599.30px;top:1226.35px;font-family:'Liberation Sans', sans-serif;font-size:21.5px;font-weight:400;color:#888;white-space:pre;line-height:normal;transform:scaleX(0.9564);transform-origin:left top;">host.id</div>
<div id="t80" style="position:absolute;left:837.70px;top:1229.41px;font-family:'Liberation Mono', monospace;font-size:19.5px;font-weight:400;color:#008080;white-space:pre;line-height:normal;letter-spacing:-0.970px;-webkit-text-stroke:0.3px #008080;">d0f4926e2b5e</div>
<div id="t81" style="position:absolute;left:599.30px;top:1274.05px;font-family:'Liberation Sans', sans-serif;font-size:21.5px;font-weight:400;color:#888;white-space:pre;line-height:normal;transform:scaleX(0.9481);transform-origin:left top;">host.name</div>
<div id="t82" style="position:absolute;left:837.70px;top:1277.12px;font-family:'Liberation Mono', monospace;font-size:19.5px;font-weight:400;color:#008080;white-space:pre;line-height:normal;letter-spacing:-0.970px;-webkit-text-stroke:0.3px #008080;">d0f4926e2b5e</div>
<div id="t83" style="position:absolute;left:599.30px;top:1321.75px;font-family:'Liberation Sans', sans-serif;font-size:21.5px;font-weight:400;color:#888;white-space:pre;line-height:normal;transform:scaleX(0.9405);transform-origin:left top;">os.type</div>
<div id="t84" style="position:absolute;left:837.70px;top:1324.82px;font-family:'Liberation Mono', monospace;font-size:19.5px;font-weight:400;color:#008080;white-space:pre;line-height:normal;letter-spacing:-0.970px;-webkit-text-stroke:0.3px #008080;">linux</div>
<div id="t85" style="position:absolute;left:599.30px;top:1369.45px;font-family:'Liberation Sans', sans-serif;font-size:21.5px;font-weight:400;color:#888;white-space:pre;line-height:normal;transform:scaleX(0.9482);transform-origin:left top;">otel.scope.name</div>
<div id="t86" style="position:absolute;left:837.70px;top:1372.52px;font-family:'Liberation Mono', monospace;font-size:19.5px;font-weight:400;color:#008080;white-space:pre;line-height:normal;letter-spacing:-0.970px;-webkit-text-stroke:0.3px #008080;">go.opentelemetry.io/obi</div>
<div id="t87" style="position:absolute;left:599.30px;top:1417.15px;font-family:'Liberation Sans', sans-serif;font-size:21.5px;font-weight:400;color:#888;white-space:pre;line-height:normal;transform:scaleX(0.9306);transform-origin:left top;">service.instance.id</div>
<div id="t88" style="position:absolute;left:837.70px;top:1420.21px;font-family:'Liberation Mono', monospace;font-size:19.5px;font-weight:400;color:#008080;white-space:pre;line-height:normal;letter-spacing:-0.970px;-webkit-text-stroke:0.3px #008080;">d0f4926e2b5e:1403772</div>
<div id="t89" style="position:absolute;left:599.30px;top:1464.85px;font-family:'Liberation Sans', sans-serif;font-size:21.5px;font-weight:400;color:#888;white-space:pre;line-height:normal;transform:scaleX(0.9660);transform-origin:left top;">telemetry.sdk.language</div>
<div id="t90" style="position:absolute;left:837.70px;top:1467.91px;font-family:'Liberation Mono', monospace;font-size:19.5px;font-weight:400;color:#008080;white-space:pre;line-height:normal;letter-spacing:-0.970px;-webkit-text-stroke:0.3px #008080;">go</div>
<div id="t91" style="position:absolute;left:599.30px;top:1512.55px;font-family:'Liberation Sans', sans-serif;font-size:21.5px;font-weight:400;color:#888;white-space:pre;line-height:normal;transform:scaleX(0.9617);transform-origin:left top;">telemetry.sdk.name</div>
<div id="t92" style="position:absolute;left:837.70px;top:1515.62px;font-family:'Liberation Mono', monospace;font-size:19.5px;font-weight:400;color:#008080;white-space:pre;line-height:normal;letter-spacing:-0.970px;-webkit-text-stroke:0.3px #008080;">opentelemetry-ebpf-instrumentation</div>
<div id="t93" style="position:absolute;left:599.30px;top:1560.25px;font-family:'Liberation Sans', sans-serif;font-size:21.5px;font-weight:400;color:#888;white-space:pre;line-height:normal;transform:scaleX(0.9626);transform-origin:left top;">telemetry.sdk.version</div>
<div id="t94" style="position:absolute;left:837.70px;top:1563.32px;font-family:'Liberation Mono', monospace;font-size:19.5px;font-weight:400;color:#008080;white-space:pre;line-height:normal;letter-spacing:-0.970px;-webkit-text-stroke:0.3px #008080;">v0.5.0</div>
<div id="t95" style="position:absolute;left:1993.30px;top:1626.45px;font-family:'Liberation Sans', sans-serif;font-size:16.5px;font-weight:400;color:#bbb;white-space:pre;line-height:normal;transform:scaleX(0.9727);transform-origin:left top;">SpanID:</div>
<div id="t96" style="position:absolute;right:75.50px;top:1626.45px;font-family:'Liberation Sans', sans-serif;font-size:16.5px;font-weight:400;color:#111;white-space:pre;line-height:normal;transform:scaleX(1.0368);transform-origin:right top;">cb2a6fbf79c9b7e2</div>
</body></html>
